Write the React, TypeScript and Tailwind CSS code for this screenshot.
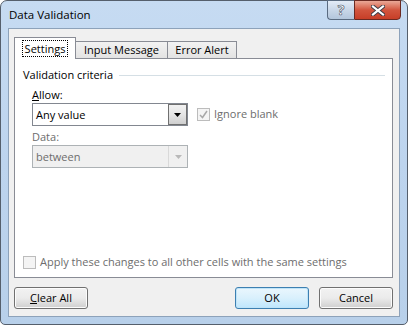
import React from "react";

const font = { fontFamily: '"Segoe UI", "Open Sans", Arial, sans-serif' };

function TitleButtons() {
  return (
    <div className="flex h-[20px] mr-[6px] -mt-px">
      <div className="w-[27px] h-[20px] rounded-bl-[4px] border border-[#5a6b80] border-r-0 bg-gradient-to-b from-[#e3ecf7] via-[#c9d7e8] to-[#b3c6dc] flex items-center justify-center">
        <span
          className="text-[14px] font-bold text-white leading-none"
          style={{ WebkitTextStroke: "0.6px #3e4a5a" }}
        >
          ?
        </span>
      </div>
      <div className="w-[47px] h-[20px] rounded-br-[4px] border border-[#6b2a22] bg-gradient-to-b from-[#e9a897] via-[#d2553e] to-[#c73e27] flex items-center justify-center">
        <svg width="14" height="11" viewBox="0 0 14 11">
          <path
            d="M2 1.5 L12 9.5 M12 1.5 L2 9.5"
            stroke="#3b3b45"
            strokeWidth="4"
            strokeLinecap="square"
          />
          <path
            d="M2 1.5 L12 9.5 M12 1.5 L2 9.5"
            stroke="#ffffff"
            strokeWidth="2.2"
            strokeLinecap="square"
          />
        </svg>
      </div>
    </div>
  );
}

function Tabs() {
  return (
    <div className="flex items-end h-[22px] ml-[5px] relative z-10">
      <div className="h-[22px] w-[62px] bg-white border border-[#898c95] border-b-0 flex items-start justify-center pt-[2px]">
        <span className="border border-dotted border-black px-[2px] leading-[15px] h-[17px]">
          Settings
        </span>
      </div>
      <div className="h-[17px] mb-px w-[92px] bg-gradient-to-b from-[#f2f2f2] to-[#e3e3e3] border border-[#898c95] border-l-0 border-b-0 flex items-center justify-center leading-[16px]">
        Input Message
      </div>
      <div className="h-[17px] mb-px w-[69px] bg-gradient-to-b from-[#f2f2f2] to-[#e3e3e3] border border-[#898c95] border-l-0 border-b-0 flex items-center justify-center leading-[16px]">
        Error Alert
      </div>
    </div>
  );
}

function Combo({ value, disabled }: { value: string; disabled?: boolean }) {
  return (
    <div
      className={
        "w-[156px] h-[23px] border flex shrink-0 " +
        (disabled ? "border-[#adb2b5] bg-[#f0f0f0]" : "border-[#828790] bg-white")
      }
    >
      <div
        className={
          "flex-1 flex items-center pl-[3px] " + (disabled ? "text-[#6d6d6d]" : "text-black")
        }
      >
        {value}
      </div>
      {disabled ? (
        <div className="w-[19px] h-full border-l border-[#d9d9d9] flex items-center justify-center">
          <svg width="7" height="4" viewBox="0 0 7 4">
            <path d="M0 0 H7 L3.5 4 Z" fill="#b9b9b9" />
          </svg>
        </div>
      ) : (
        <div className="w-[19px] h-[21px] border border-[#707070] bg-gradient-to-b from-[#f2f2f2] via-[#e5e5e5] to-[#cfcfcf] flex items-center justify-center">
          <svg width="7" height="4" viewBox="0 0 7 4">
            <path d="M0 0 H7 L3.5 4 Z" fill="#000" />
          </svg>
        </div>
      )}
    </div>
  );
}

function Check({ checked }: { checked?: boolean }) {
  return (
    <div className="w-[13px] h-[13px] shrink-0 border border-[#bcbcbc] bg-[#f4f4f4] flex items-center justify-center">
      {checked && (
        <svg width="9" height="9" viewBox="0 0 9 9">
          <path d="M1 5 L3.5 7.5 L8 1" stroke="#a8a8a8" strokeWidth="1.5" fill="none" />
        </svg>
      )}
    </div>
  );
}

function Btn({ children, primary }: { children: React.ReactNode; primary?: boolean }) {
  return (
    <div
      className={
        "w-[74px] h-[22px] rounded-[3px] border flex items-center justify-center leading-[16px] " +
        (primary
          ? "border-[#3c7fb1] bg-gradient-to-b from-[#eaf6fd] via-[#d9f0fc] to-[#bee6fd] shadow-[inset_0_0_0_1px_#bfe4f8]"
          : "border-[#707070] bg-gradient-to-b from-[#f2f2f2] via-[#ebebeb] to-[#cfcfcf] shadow-[inset_0_0_0_1px_#fcfcfc]")
      }
    >
      {children}
    </div>
  );
}

export default function App() {
  return (
    <div
      className="w-[408px] h-[325px] flex flex-col rounded-t-[7px] rounded-b-[5px] border border-[#555f6c] bg-gradient-to-b from-[#c6dbf2] via-[#bdd4ee] to-[#b8d0ea] text-[11px] text-black"
      style={font}
    >
      <div className="h-[27px] flex items-start shrink-0">
        <div className="pl-[8px] pt-[6px] leading-[16px] text-[11.5px]">Data Validation</div>
        <div className="ml-auto">
          <TitleButtons />
        </div>
      </div>
      <div className="flex-1 mx-[7px] mb-[7px] border border-[#8da2ba] bg-[#f0f0f0] flex flex-col">
        <div className="pt-[8px]">
          <Tabs />
        </div>
        <div className="ml-[5px] w-[379px] h-[220px] -mt-px bg-white border border-[#898c95] flex flex-col leading-[16px]">
          <div className="flex items-center pl-[8px] pr-[7px] mt-[8px] h-[16px]">
            <span>Validation criteria</span>
            <div className="flex-1 ml-[6px] h-px bg-[#d5dfe5]" />
          </div>
          <div className="pl-[17px] mt-[4px] h-[16px]">
            <span className="underline">A</span>llow:
          </div>
          <div className="pl-[17px] flex items-start">
            <Combo value="Any value" />
            <div className="ml-[9px] mt-[3px] flex items-center gap-[4px] text-[#6d6d6d]">
              <Check checked />
              <span>Ignore blank</span>
            </div>
          </div>
          <div className="pl-[17px] mt-[3px] h-[16px] text-[#6d6d6d]">Data:</div>
          <div className="pl-[17px]">
            <Combo value="between" disabled />
          </div>
          <div className="mt-auto mb-[7px] h-[16px] pl-[8px] flex items-center gap-[4px] text-[#6d6d6d]">
            <Check />
            <span>Apply these changes to all other cells with the same settings</span>
          </div>
        </div>
        <div className="flex mt-[9px] ml-[5px] mr-[6px]">
          <Btn>
            <span className="underline">C</span>lear All
          </Btn>
          <div className="ml-auto flex gap-[10px]">
            <Btn primary>OK</Btn>
            <Btn>Cancel</Btn>
          </div>
        </div>
      </div>
    </div>
  );
}
